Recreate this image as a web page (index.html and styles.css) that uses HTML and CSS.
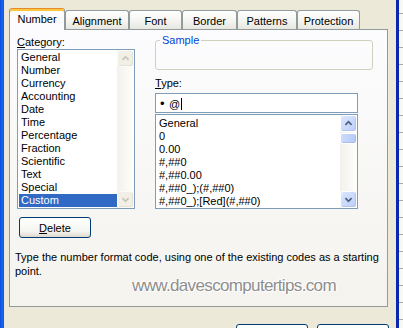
FILE: index.html
```html
<!DOCTYPE html>
<html lang="en">
<head>
  <meta charset="UTF-8" />
  <title>Format Cells</title>
  <link rel="stylesheet" href="styles.css">
</head>
<body>
  <div class="screen">
    <div class="frame-left"></div>

    <div class="dialog">
      <div class="tabs">
        <div class="tab active">Number</div>
        <div class="tab">Alignment</div>
        <div class="tab">Font</div>
        <div class="tab">Border</div>
        <div class="tab">Patterns</div>
        <div class="tab">Protection</div>
      </div>

      <div class="panel">
        <div class="columns">
          <div class="col-left">
            <div class="label"><u>C</u>ategory:</div>
            <div class="listbox category">
              <ul class="items">
                <li>General</li>
                <li>Number</li>
                <li>Currency</li>
                <li>Accounting</li>
                <li>Date</li>
                <li>Time</li>
                <li>Percentage</li>
                <li>Fraction</li>
                <li>Scientific</li>
                <li>Text</li>
                <li>Special</li>
                <li class="selected">Custom</li>
              </ul>
              <div class="scrollbar disabled">
                <div class="sb-btn"><svg viewBox="0 0 17 17"><polyline points="5,10 8.5,6.5 12,10" /></svg></div>
                <div class="sb-track"></div>
                <div class="sb-btn"><svg viewBox="0 0 17 17"><polyline points="5,7 8.5,10.5 12,7" /></svg></div>
              </div>
            </div>
          </div>

          <div class="col-right">
            <fieldset class="sample">
              <legend>Sample</legend>
            </fieldset>
            <div class="label type-label"><u>T</u>ype:</div>
            <div class="input"><span class="bullet">•</span>@<span class="caret"></span></div>
            <div class="listbox types">
              <ul class="items">
                <li>General</li>
                <li>0</li>
                <li>0.00</li>
                <li>#,##0</li>
                <li>#,##0.00</li>
                <li>#,##0_);(#,##0)</li>
                <li>#,##0_);[Red](#,##0)</li>
              </ul>
              <div class="scrollbar">
                <div class="sb-btn"><svg viewBox="0 0 17 17"><polyline points="5,10 8.5,6.5 12,10" /></svg></div>
                <div class="sb-track">
                  <div class="sb-thumb"></div>
                </div>
                <div class="sb-btn"><svg viewBox="0 0 17 17"><polyline points="5,7 8.5,10.5 12,7" /></svg></div>
              </div>
            </div>
          </div>
        </div>

        <button class="btn delete"><u>D</u>elete</button>

        <p class="hint">Type the number format code, using one of the existing codes as a starting point.</p>

        <div class="watermark">www.davescomputertips.com</div>
      </div>

      <div class="footer">
        <button class="btn">OK</button>
        <button class="btn">Cancel</button>
      </div>
    </div>

    <div class="frame-right">
      <div class="edge"></div>
      <div class="grid"></div>
    </div>
  </div>
</body>
</html>
```

FILE: styles.css
```css
*, *::before, *::after {
  box-sizing: border-box;
  margin: 0;
  padding: 0;
}

body {
  width: 403px;
  height: 328px;
  overflow: hidden;
  font-family: "Liberation Sans", Arial, sans-serif;
  font-size: 11px;
  line-height: 13px;
  color: #000;
  background-color: #ece9d8;
}

.screen {
  display: flex;
  height: 328px;
}

.frame-left {
  width: 4px;
  background: linear-gradient(to right, #0a4fe0, #1e66f0 70%, #0b4cd8);
}

.frame-right {
  display: flex;
  width: 7px;
}

.frame-right .edge {
  width: 3px;
  background-color: #0a27b0;
}

.frame-right .grid {
  flex: 1;
  background: repeating-linear-gradient(#f8f8f5 0 13px, #a8a8a8 13px 14px, #f8f8f5 14px 17px);
}

.dialog {
  flex: 1;
  display: flex;
  flex-direction: column;
  padding: 8px 0 0 5px;
}

.dialog > * {
  flex-shrink: 0;
}

/* tabs */

.tabs {
  display: flex;
  height: 21px;
}

.tab {
  height: 19px;
  margin-top: 2px;
  padding-top: 3px;
  line-height: 14px;
  text-align: center;
  white-space: nowrap;
  border: 1px solid #919b9c;
  border-bottom: none;
  border-radius: 3px 3px 0 0;
  background: linear-gradient(#ffffff, #f3f3ef 60%, #e8e7e0);
}

.tab:nth-child(1) { width: 56px; }
.tab:nth-child(2) { width: 64px; }
.tab:nth-child(3) { width: 53px; }
.tab:nth-child(4) { width: 55px; }
.tab:nth-child(5) { width: 60px; }
.tab:nth-child(6) { width: 63px; }

.tab.active {
  position: relative;
  z-index: 1;
  height: 22px;
  margin-top: 0;
  margin-bottom: -1px;
  border-top-color: #e68b2c;
  background: #fcfcfe;
  box-shadow: inset 0 2px 0 #ffc83c;
}

/* panel */

.panel {
  width: 379px;
  height: 278px;
  padding: 4px 7px 0;
  border: 1px solid #919b9c;
  background: linear-gradient(#fcfcfe, #f4f3ee);
}

.columns {
  display: flex;
  gap: 20px;
}

.col-left {
  width: 118px;
  padding-top: 2px;
}

.col-right {
  width: 218px;
}

.label {
  height: 13px;
}

.listbox {
  display: flex;
  border: 1px solid #7f9db9;
  background-color: #fff;
  overflow: hidden;
}

.listbox.category {
  height: 160px;
}

.listbox.types {
  width: 203px;
  height: 95px;
  margin-top: 1px;
}

.items {
  flex: 1;
  list-style: none;
  padding: 1px 0 0 1px;
}

.types .items {
  padding-top: 2px;
}

.items li {
  height: 13px;
  padding-left: 2px;
  white-space: nowrap;
}

.items li.selected {
  background-color: #316ac5;
  color: #fff;
}

/* scrollbars */

.scrollbar {
  display: flex;
  flex-direction: column;
  width: 17px;
  background: linear-gradient(to right, #f3f1ec, #fefefb);
}

.sb-btn {
  height: 17px;
  border: 1px solid #fff;
  border-radius: 3px;
  background: linear-gradient(135deg, #dce6fd, #bccffa);
  box-shadow: inset -1px -1px 0 #b2c5ef;
}

.sb-btn svg {
  display: block;
  width: 15px;
  height: 15px;
}

.sb-btn polyline {
  fill: none;
  stroke: #4d6185;
  stroke-width: 2;
}

.sb-track {
  flex: 1;
  padding-top: 1px;
}

.sb-thumb {
  height: 11px;
  border: 1px solid #fff;
  border-radius: 3px;
  background: linear-gradient(to right, #cbdafc, #b8cbf7);
  box-shadow: inset -1px -1px 0 #a9bdea;
}

.scrollbar.disabled {
  background-color: #fdfdfa;
}

.scrollbar.disabled .sb-btn {
  border-color: #fbfbf8;
  background: #f1efe6;
  box-shadow: inset -1px -1px 0 #e3e1d6;
}

.scrollbar.disabled polyline {
  stroke: #c9c7ba;
}

/* right column */

.sample {
  height: 36px;
  padding: 0 0 0 4px;
  border: 1px solid #d0d0bf;
  border-radius: 3px;
}

.sample legend {
  padding: 0 2px;
  line-height: 13px;
  color: #0046d5;
}

.type-label {
  margin-top: 7px;
}

.input {
  width: 203px;
  height: 20px;
  margin-top: 3px;
  padding: 1px 0 0 4px;
  line-height: 17px;
  border: 1px solid #7f9db9;
  background-color: #fff;
}

.bullet {
  display: inline-block;
  width: 9px;
  font-size: 13px;
}

.caret {
  display: inline-block;
  width: 1px;
  height: 12px;
  margin-left: 1px;
  vertical-align: -2px;
  background-color: #000;
}

/* buttons and text */

.btn {
  width: 72px;
  height: 21px;
  font-family: inherit;
  font-size: 11px;
  color: #000;
  border: 1px solid #003c74;
  border-radius: 3px;
  background: linear-gradient(#ffffff, #f4f4f0 70%, #dcd8cc);
}

.delete {
  margin: 8px 0 0 2px;
}

.hint {
  width: 366px;
  margin: 12px 0 0 -2px;
  line-height: 14px;
}

.watermark {
  margin-left: 115px;
  font-size: 17px;
  line-height: 16px;
  letter-spacing: -0.65px;
  color: #8e8e8e;
  text-shadow: 1px 1px 0 #fff, -1px -1px 0 #fff, 0 0 2px #fff;
}

.footer {
  display: flex;
  justify-content: flex-end;
  gap: 9px;
  margin-top: 17px;
  padding-right: 7px;
}

.footer .btn {
  height: 23px;
}
```
